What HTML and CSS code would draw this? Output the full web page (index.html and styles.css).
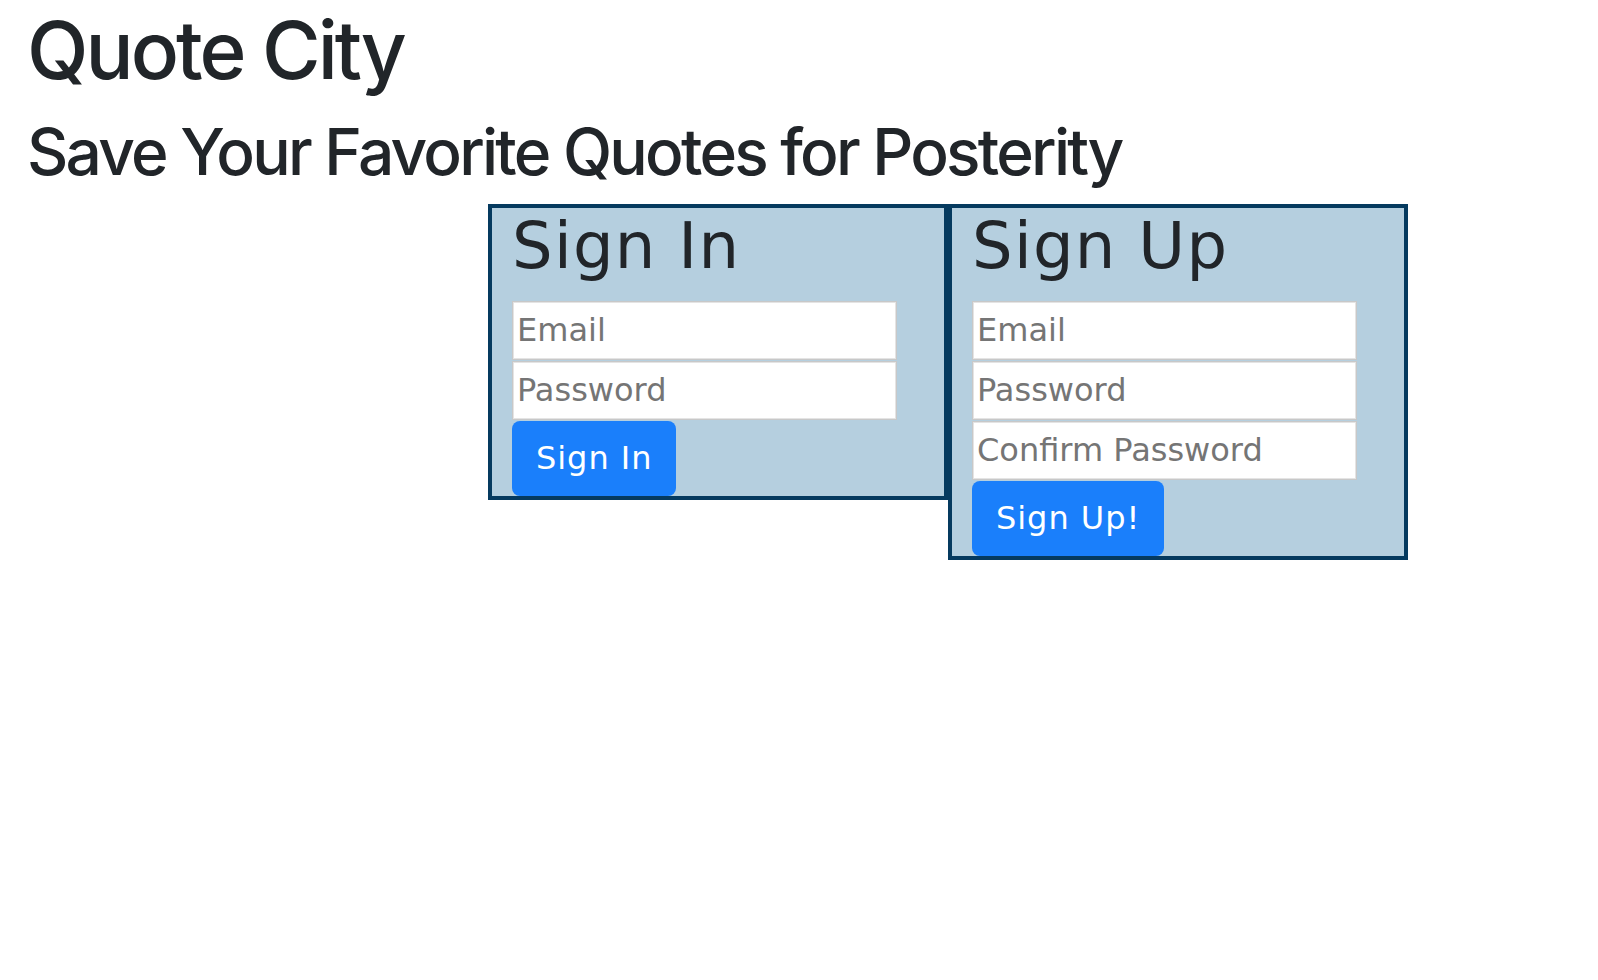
FILE: index.html
```html
<!DOCTYPE html>
<html lang="en">
<head>
<meta charset="utf-8">
<title>Quote City</title>
<link rel="stylesheet" href="styles.css">
</head>
<body>
<div class="page">
  <h1 class="title">Quote City</h1>
  <h2 class="subtitle">Save Your Favorite Quotes for Posterity</h2>
  <div class="forms">
    <form class="panel">
      <h2 class="panel-title">Sign In</h2>
      <input class="field" type="text" placeholder="Email">
      <input class="field" type="password" placeholder="Password">
      <button class="btn" type="button">Sign In</button>
    </form>
    <form class="panel">
      <h2 class="panel-title">Sign Up</h2>
      <input class="field" type="text" placeholder="Email">
      <input class="field" type="password" placeholder="Password">
      <input class="field" type="password" placeholder="Confirm Password">
      <button class="btn" type="button">Sign Up!</button>
    </form>
  </div>
</div>
</body>
</html>
```

FILE: styles.css
```css
html, body {
  margin: 0;
  padding: 0;
  background: #ffffff;
}

.page {
  padding: 2px 0 0 27px;
  color: #212529;
  font-family: Inter, "Noto Sans", sans-serif;
}

.title {
  margin: 0 0 16px;
  font-size: 80px;
  font-weight: 500;
  line-height: 1.2;
  letter-spacing: -0.037em;
}

.subtitle {
  margin: 0 0 13px;
  font-size: 64px;
  font-weight: 500;
  line-height: 1.2;
  letter-spacing: -0.043em;
}

.forms {
  display: flex;
  align-items: flex-start;
  padding-left: 461px;
}

.panel {
  width: 460px;
  background: #b5cfdf;
  border: 4px solid #053a5f;
  padding: 0 0 0 20px;
  box-sizing: border-box;
  display: flex;
  flex-direction: column;
  align-items: flex-start;
  font-family: "DejaVu Sans", Verdana, sans-serif;
}

.panel-title {
  margin: 0 0 16px;
  font-size: 64px;
  font-weight: 400;
  line-height: 1.2;
  letter-spacing: 0.02em;
  color: #212529;
}

.field {
  width: 385px;
  height: 59px;
  box-sizing: border-box;
  margin: 0 0 1px;
  padding: 0 4px;
  border: 1px solid #c8c8c8;
  box-shadow: inset 0 0 0 1px #e4e4e4;
  background: #ffffff;
  font-family: "DejaVu Sans", Verdana, sans-serif;
  font-size: 32px;
  color: #333;
  outline: none;
}

.field::placeholder {
  color: #757575;
}

.btn {
  height: 75px;
  padding: 0 24px;
  border: none;
  border-radius: 8px;
  background: #1a7ffb;
  color: #ffffff;
  font-family: "DejaVu Sans", Verdana, sans-serif;
  font-size: 32px;
  letter-spacing: 0.03em;
  cursor: pointer;
}
```
